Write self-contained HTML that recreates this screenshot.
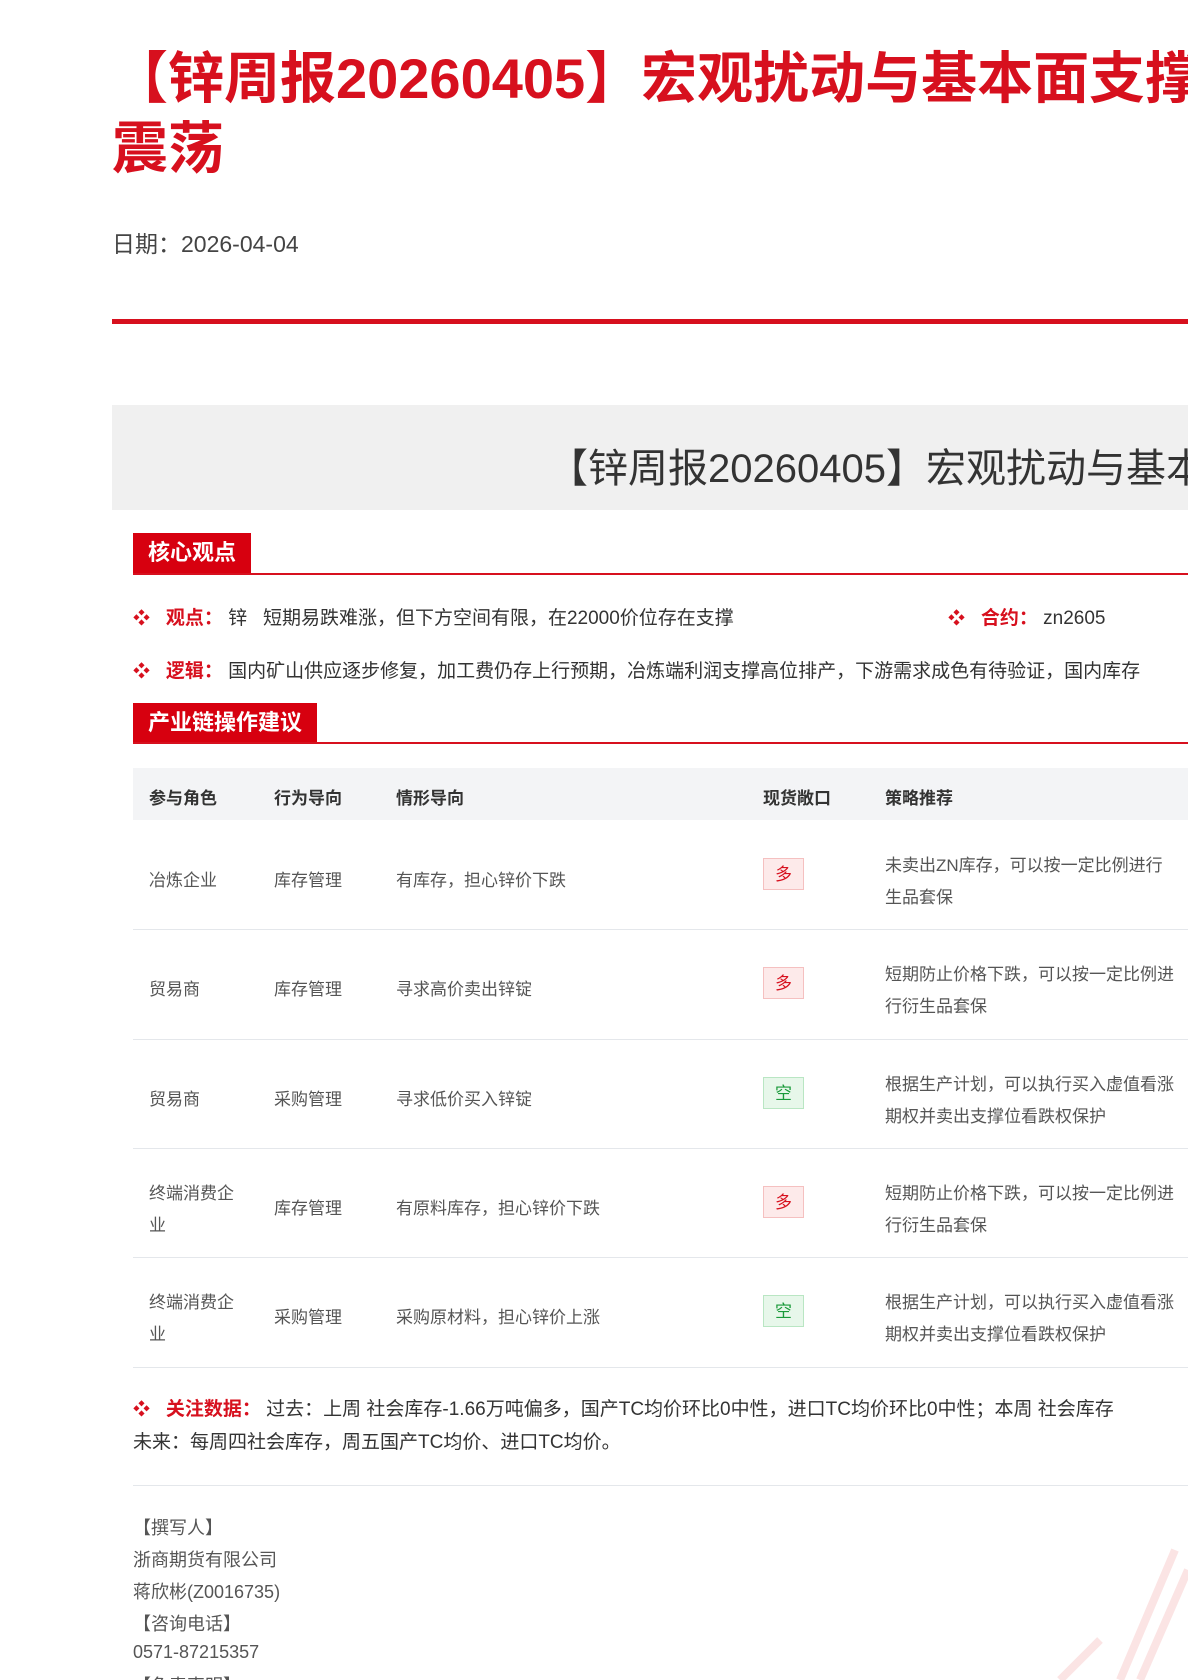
<!DOCTYPE html>
<html style="width:1188px;height:1680px;overflow:hidden"><head><meta charset="utf-8"><style>
*{margin:0;padding:0;box-sizing:border-box}
body{width:1188px;height:1680px;overflow:hidden;background:#fff;font-family:"Liberation Sans","Noto Sans CJK SC",sans-serif;position:relative;color:#333}
.abs{position:absolute;white-space:nowrap}
.clip{right:0;overflow:hidden}
.t1{left:112px;font-size:56px;font-weight:bold;color:#d7101e;line-height:70px}
.red{color:#d7101e}
.tab{position:absolute;left:133px;background:#d7000f;color:#fff;font-size:22px;font-weight:bold;padding:0 15px;line-height:40px}
.hl{position:absolute;left:133px;right:0;height:2px;background:#d7101e}
.b{font-size:19px;color:#333}
.dot{color:#d7101e;font-size:17px}
.th{font-size:17px;font-weight:bold;color:#333}
.td{font-size:17px;color:#555}
.badge{position:absolute;left:763px;width:41px;height:32px;font-size:17px;text-align:center;line-height:32px}
.up{background:#fdeaea;color:#d7101e;border:1px solid #f5c0c0}
.dn{background:#e7f7ea;color:#1a9a3a;border:1px solid #b9e6c3}
.rl{position:absolute;left:133px;right:0;height:1px;background:#e4e7eb}
.f{font-size:18px;color:#555;left:133px}
</style></head><body>
<div class="abs t1 clip" style="top:44px">【锌周报20260405】宏观扰动与基本面支撑</div>
<div class="abs t1" style="top:114px">震荡</div>
<div class="abs" style="left:112px;top:225px;font-size:23px;color:#444">日期：2026-04-04</div>
<div style="position:absolute;left:112px;right:0;top:319px;height:5px;background:#d7101e"></div>
<div style="position:absolute;left:112px;right:0;top:405px;height:105px;background:#f0f0f0"></div>
<div class="abs clip" style="left:548px;top:436px;font-size:40px;color:#333">【锌周报20260405】宏观扰动与基本面支撑震荡</div>

<div class="tab" style="top:533px">核心观点</div>
<div class="hl" style="top:573px"></div>
<div class="abs b" style="left:133px;top:603px"><span class="dot">❖</span>&nbsp;&nbsp; <b class="red">观点：</b> 锌&nbsp;&nbsp;&nbsp;短期易跌难涨，但下方空间有限，在22000价位存在支撑</div>
<div class="abs b" style="left:948px;top:603px"><span class="dot">❖</span>&nbsp;&nbsp; <b class="red">合约：</b> zn2605</div>
<div class="abs b clip" style="left:133px;top:656px"><span class="dot">❖</span>&nbsp;&nbsp; <b class="red">逻辑：</b> 国内矿山供应逐步修复，加工费仍存上行预期，冶炼端利润支撑高位排产，下游需求成色有待验证，国内库存</div>

<div class="tab" style="top:703px">产业链操作建议</div>
<div class="hl" style="top:742px"></div>
<div style="position:absolute;left:133px;right:0;top:768px;height:52px;background:#f3f4f6"></div>
<div class="abs th" style="left:149px;top:784px">参与角色</div>
<div class="abs th" style="left:274px;top:784px">行为导向</div>
<div class="abs th" style="left:396px;top:784px">情形导向</div>
<div class="abs th" style="left:763px;top:784px">现货敞口</div>
<div class="abs th" style="left:885px;top:784px">策略推荐</div>

<div class="abs td" style="left:149px;top:866px">冶炼企业</div>
<div class="abs td" style="left:274px;top:866px">库存管理</div>
<div class="abs td" style="left:396px;top:866px">有库存，担心锌价下跌</div>
<div class="badge up" style="top:858px">多</div>
<div class="abs td" style="left:885px;top:850px;line-height:32px">未卖出ZN库存，可以按一定比例进行<br>生品套保</div>
<div class="rl" style="top:929px"></div>

<div class="abs td" style="left:149px;top:975px">贸易商</div>
<div class="abs td" style="left:274px;top:975px">库存管理</div>
<div class="abs td" style="left:396px;top:975px">寻求高价卖出锌锭</div>
<div class="badge up" style="top:967px">多</div>
<div class="abs td" style="left:885px;top:959px;line-height:32px">短期防止价格下跌，可以按一定比例进<br>行衍生品套保</div>
<div class="rl" style="top:1039px"></div>

<div class="abs td" style="left:149px;top:1085px">贸易商</div>
<div class="abs td" style="left:274px;top:1085px">采购管理</div>
<div class="abs td" style="left:396px;top:1085px">寻求低价买入锌锭</div>
<div class="badge dn" style="top:1077px">空</div>
<div class="abs td" style="left:885px;top:1069px;line-height:32px">根据生产计划，可以执行买入虚值看涨<br>期权并卖出支撑位看跌权保护</div>
<div class="rl" style="top:1148px"></div>

<div class="abs td" style="left:149px;top:1178px;line-height:32px">终端消费企<br>业</div>
<div class="abs td" style="left:274px;top:1194px">库存管理</div>
<div class="abs td" style="left:396px;top:1194px">有原料库存，担心锌价下跌</div>
<div class="badge up" style="top:1186px">多</div>
<div class="abs td" style="left:885px;top:1178px;line-height:32px">短期防止价格下跌，可以按一定比例进<br>行衍生品套保</div>
<div class="rl" style="top:1257px"></div>

<div class="abs td" style="left:149px;top:1287px;line-height:32px">终端消费企<br>业</div>
<div class="abs td" style="left:274px;top:1303px">采购管理</div>
<div class="abs td" style="left:396px;top:1303px">采购原材料，担心锌价上涨</div>
<div class="badge dn" style="top:1295px">空</div>
<div class="abs td" style="left:885px;top:1287px;line-height:32px">根据生产计划，可以执行买入虚值看涨<br>期权并卖出支撑位看跌权保护</div>
<div class="rl" style="top:1367px"></div>

<div class="abs b clip" style="left:133px;top:1394px"><span class="dot">❖</span>&nbsp;&nbsp; <b class="red">关注数据：</b> 过去：上周 社会库存-1.66万吨偏多，国产TC均价环比0中性，进口TC均价环比0中性；本周 社会库存</div>
<div class="abs b" style="left:133px;top:1427px">未来：每周四社会库存，周五国产TC均价、进口TC均价。</div>
<div class="rl" style="top:1485px"></div>

<div class="abs f" style="top:1514px">【撰写人】</div>
<div class="abs f" style="top:1546px">浙商期货有限公司</div>
<div class="abs f" style="top:1578px">蒋欣彬(Z0016735)</div>
<div class="abs f" style="top:1610px">【咨询电话】</div>
<div class="abs f" style="top:1642px">0571-87215357</div>
<div class="abs f" style="top:1672px">【免责声明】</div>
<svg style="position:absolute;left:1000px;top:1530px" width="188" height="150"><path d="M175 20 L120 150 M188 40 L140 150 M60 150 L100 110" stroke="#fbe4e4" stroke-width="8" fill="none"/></svg>
</body></html>
